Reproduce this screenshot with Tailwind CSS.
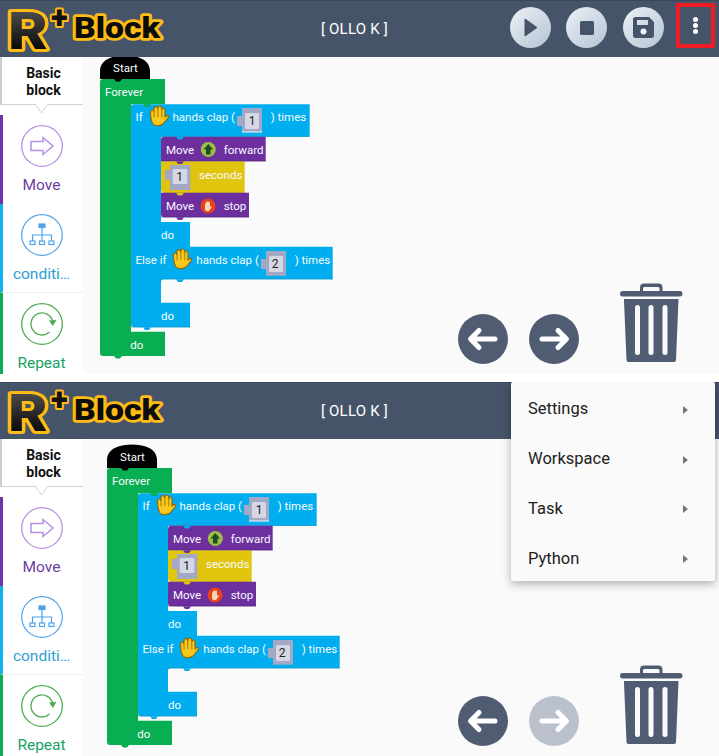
<!DOCTYPE html>
<html>
<head>
<meta charset="utf-8">
<script src="https://cdn.jsdelivr.net/npm/@tailwindcss/browser@4"></script>
</head>
<body class="m-0 bg-white font-['Roboto',sans-serif]">
<div class="w-[719px] h-[756px] overflow-hidden flex flex-col gap-[8px]">

<!-- PANEL 1 -->
<section class="relative w-[719px] h-[374px] flex flex-col overflow-hidden">
  <header class="relative h-[57px] shrink-0 bg-[#46546a] border-t border-[#3a4659] flex items-center">
    <svg class="absolute left-0 top-[-1px]" width="170" height="64" viewBox="0 0 170 64">
      <defs><linearGradient id="lg1" x1="0" y1="0" x2="0" y2="1"><stop offset="0" stop-color="#5e5e5e"/><stop offset="0.8" stop-color="#080808"/><stop offset="1" stop-color="#000"/></linearGradient></defs>
      <text x="8" y="49" font-family="Roboto" font-weight="900" font-size="52" fill="url(#lg1)" stroke="#fdbb14" stroke-width="6" stroke-linejoin="round" paint-order="stroke" textLength="40" lengthAdjust="spacingAndGlyphs">R</text>
      <text x="51" y="28" font-family="Roboto" font-weight="900" font-size="31" fill="#111" stroke="#fdbb14" stroke-width="4" stroke-linejoin="round" paint-order="stroke">+</text>
      <text x="74" y="38" font-family="Roboto" font-weight="900" font-size="29" fill="#0c0c0c" stroke="#fdbb14" stroke-width="5.5" stroke-linejoin="round" paint-order="stroke" textLength="86" lengthAdjust="spacingAndGlyphs">Block</text>
    </svg>
    <div class="absolute left-[321px] top-[18px] text-[15px] leading-[20px] tracking-[0.2px] text-white whitespace-pre">[ OLLO K ]</div>
    <div class="absolute left-[510px] top-[6px] w-[41px] h-[41px] rounded-full bg-gradient-to-br from-[#eef2f6] to-[#b3c3d4] flex items-center justify-center">
      <svg width="14" height="19" viewBox="0 0 14 19"><path d="M1 1 L13 9.5 L1 18 Z" fill="#46546a" stroke="#46546a" stroke-linejoin="round"/></svg>
    </div>
    <div class="absolute left-[566px] top-[6px] w-[41px] h-[41px] rounded-full bg-gradient-to-br from-[#eef2f6] to-[#b3c3d4] flex items-center justify-center">
      <div class="w-[14px] h-[14px] rounded-[1.5px] bg-[#46546a]"></div>
    </div>
    <div class="absolute left-[623px] top-[6px] w-[41px] h-[41px] rounded-full bg-gradient-to-br from-[#eef2f6] to-[#b3c3d4] flex items-center justify-center">
      <svg width="21" height="21" viewBox="0 0 21 21"><path d="M2.5 0 H16 L21 5 V18.5 A2.5 2.5 0 0 1 18.5 21 H2.5 A2.5 2.5 0 0 1 0 18.5 V2.5 A2.5 2.5 0 0 1 2.5 0 Z M4 3 V8 H15 V3 Z" fill="#46546a" fill-rule="evenodd"/><circle cx="10.5" cy="14.5" r="3" fill="#eef2f6"/></svg>
    </div>
    <div class="absolute left-[676px] top-[2px] w-[39px] h-[45px] border-[4px] border-[#ed1c24] flex flex-col items-center justify-center gap-[1.7px]">
      <span class="w-[4.4px] h-[4.4px] rounded-full bg-white"></span>
      <span class="w-[4.4px] h-[4.4px] rounded-full bg-white"></span>
      <span class="w-[4.4px] h-[4.4px] rounded-full bg-white"></span>
    </div>
  </header>
  <div class="flex flex-1 min-h-0">
    <aside class="w-[83px] shrink-0 bg-white flex flex-col">
      <div class="relative h-[48px] shrink-0 border-l-2 border-[#c9cdd6] border-b border-b-[#cfd2d8] pl-[2px] pt-[2px] flex items-center justify-center text-center text-[14px] leading-[17px] font-bold text-[#111]">
        <span>Basic<br>block</span>
        <svg class="absolute left-[33px] top-[47px]" width="14" height="10" viewBox="0 0 14 10"><path d="M0 0 L6.5 9 L13 0" fill="#fff" stroke="#cfd2d8"/></svg>
      </div>
      <div class="mt-[10px] h-[89px] shrink-0 border-l-[3px] border-[#6f35a5] pr-[3px] pt-[10px] flex flex-col items-center">
        <svg width="42" height="42" viewBox="0 0 42 42" fill="none" stroke="#b78fe3" stroke-width="1.3"><circle cx="21" cy="21" r="20.3"/><path d="M10 16.5 H22 V12.5 L32 21 L22 29.5 V25.5 H10 Z" stroke-width="1.5"/></svg>
        <span class="mt-[8px] text-[15.5px] leading-[20px] text-[#6c3d9f]">Move</span>
      </div>
      <div class="h-[88px] shrink-0 border-l-[3px] border-[#0fb2ef] pr-[3px] pt-[10px] flex flex-col items-center">
        <svg width="42" height="42" viewBox="0 0 42 42" fill="none" stroke="#4fa3ea" stroke-width="1.2"><circle cx="21" cy="21" r="20.3"/><rect x="18" y="10" width="6" height="3.5" fill="#4fa3ea"/><path d="M21 13.5 V27 M11.5 27 V21 H30.5 V27"/><rect x="9" y="27" width="5" height="3.5"/><rect x="18.5" y="27" width="5" height="3.5"/><rect x="28" y="27" width="5" height="3.5"/></svg>
        <span class="mt-[8px] text-[15.5px] leading-[20px] text-[#2e9fd3]">conditi…</span>
      </div>
      <div class="flex-1 border-l-[3px] border-[#0aae52] border-t border-t-[#eeeeee] pr-[3px] pt-[10px] flex flex-col items-center">
        <svg width="42" height="42" viewBox="0 0 42 42" fill="none" stroke="#4cad50" stroke-width="1.3"><circle cx="21" cy="21" r="20.3"/><path d="M28.5 29 A11 11 0 1 1 31.8 19"/><path d="M28 17.5 L35.5 17 L31.8 23 Z" fill="#4cad50" stroke="none"/></svg>
        <span class="mt-[8px] text-[15.5px] leading-[20px] text-[#18a266]">Repeat</span>
      </div>
    </aside>
    <main class="relative flex-1 bg-[#fafafa] overflow-hidden">
      <svg class="absolute left-[17px] top-[-2px]" width="260" height="310" viewBox="0 -24 260 310" overflow="visible">
        <path d="M0 0 V-8 C0 -14 4 -19 10 -21 C17 -24.5 33 -24.5 40 -21 C46 -19 50 -14 50 -8 V0 Z" fill="#000"/>
        <path d="M3 0 H65 V25.3 H31 V252.7 H65 V277 H3 Q0 277 0 274 V3 Q0 0 3 0 Z" fill="#0aae52"/>
        <path d="M34 25.3 H209.7 V57.7 H61 V143 H90 V167.7 H232.7 V200.3 H64 Q61 200.3 61 203 V223.7 H90 V248.3 H34 Q31 248.3 31 245 V28 Q31 25.3 34 25.3 Z" fill="#00aeef"/>
        <path d="M61 57.2 H209.7 V57.7 H61 Z M61 199.8 H232.7 V200.3 H61 Z M31 247.8 H90 V248.3 H31 Z" fill="#0a86bd"/>
        <path d="M64 57.7 H165.7 V82.3 H61 V61 Q61 57.7 64 57.7 Z" fill="#6d2f9e"/>
        <path d="M61 82.3 H144.7 V113.7 H64 Q61 113.7 61 110 Z" fill="#e0c40e"/>
        <path d="M61 113.7 H149 V138.3 H64 Q61 138.3 61 135 Z" fill="#6d2f9e"/>
        <path d="M61 81.8 H165.7 V82.3 H61 Z M61 137.8 H149 V138.3 H61 Z" fill="#4c1f75"/>
        <path d="M64 113.2 H144.7 V113.7 H64 Z" fill="#a8920c"/>
        <path d="M14 0 L16 2.5 H20 L22 0 Z" fill="#000"/>
        <path d="M43 25.3 L45 28 H49 L51 25.3 Z" fill="#0aae52"/>
        <path d="M76 57.7 L78 60.5 H82 L84 57.7 Z" fill="#00aeef"/>
        <path d="M76 82.3 L78 85 H82 L84 82.3 Z" fill="#6d2f9e"/>
        <path d="M76 113.7 L78 116.5 H82 L84 113.7 Z" fill="#e0c40e"/>
        <path d="M76 138.3 L78 141 H82 L84 138.3 Z" fill="#6d2f9e"/>
        <path d="M76 200.3 L78 203 H82 L84 200.3 Z" fill="#00aeef"/>
        <path d="M43 167.7 L45 170.5 H49 L51 167.7 Z" fill="#00aeef"/>
        <path d="M43 248.3 L45 251 H49 L51 248.3 Z" fill="#00aeef"/>
        <path d="M14 277 L16 279.5 H20 L22 277 Z" fill="#0aae52"/>
        <g fill="#f7fbff" font-family="Roboto" font-size="11.5">
          <text x="25.5" y="-7.5" text-anchor="middle">Start</text>
          <text x="5" y="16.5">Forever</text>
          <text x="35.5" y="41.5">If</text>
          <text x="72.5" y="41.5">hands clap (</text>
          <text x="170.7" y="41.5">) times</text>
          <text x="66" y="75">Move</text>
          <text x="123.7" y="75">forward</text>
          <text x="99" y="99.5">seconds</text>
          <text x="66" y="131">Move</text>
          <text x="123.7" y="131">stop</text>
          <text x="61" y="160">do</text>
          <text x="35.5" y="185">Else if</text>
          <text x="96.3" y="185">hands clap (</text>
          <text x="194.7" y="185">) times</text>
          <text x="61" y="241">do</text>
          <text x="30.3" y="270">do</text>
        </g>
        <g>
          <path d="M137 37 H142 V29 H162 V53.3 H142 V47 H137 Z" fill="#a3a8c4"/>
          <rect x="145" y="34" width="14" height="16" rx="1.5" fill="#d6d7e4"/>
          <path d="M142 53 H162" stroke="#eaf7ff" stroke-width="1"/>
          <text x="152" y="46" text-anchor="middle" font-family="Roboto" font-size="12" fill="#222">1</text>
        </g>
        <g>
          <path d="M65 91 H70 V86 H90.3 V111 H70 V101 H65 Z" fill="#a3a8c4"/>
          <rect x="72.7" y="90" width="14.6" height="15" rx="1.5" fill="#d6d7e4"/>
          <text x="79.5" y="102" text-anchor="middle" font-family="Roboto" font-size="12" fill="#222">1</text>
        </g>
        <g>
          <path d="M161 180 H166 V172 H186 V196.7 H166 V190 H161 Z" fill="#a3a8c4"/>
          <rect x="169" y="177" width="14" height="16" rx="1.5" fill="#d6d7e4"/>
          <text x="175" y="189" text-anchor="middle" font-family="Roboto" font-size="12" fill="#222">2</text>
        </g>
        <g fill="#f8c81c" stroke="#8f6408" stroke-width="1.1" stroke-linejoin="round" stroke-linecap="round">
          <path d="M53 45 C51 42 50.5 38 50.5 33 C50.5 30.5 53.5 30.5 53.8 32.5 L54 29.5 C54 27 57.5 27 57.7 29.5 L58 28.5 C58 26.5 61.5 26.5 61.7 29 L62 30.5 C62 28.5 65 28.5 65 31 V38 L67 36.5 C68.5 36 69 38 68 39 L63 45 C61 47 55 47.5 53 45 Z"/>
          <path d="M54 32.5 V38 M57.8 29.5 V37.5 M61.8 30 V38" fill="none" stroke-width="0.8"/>
        </g>
        <g fill="#f8c81c" stroke="#8f6408" stroke-width="1.1" stroke-linejoin="round" stroke-linecap="round">
          <path d="M76 188 C74 185 73.5 181 73.5 176 C73.5 173.5 76.5 173.5 76.8 175.5 L77 172.5 C77 170 80.5 170 80.7 172.5 L81 171.5 C81 169.5 84.5 169.5 84.7 172 L85 173.5 C85 171.5 88 171.5 88 174 V181 L90 179.5 C91.5 179 92 181 91 182 L86 188 C84 190 78 190.5 76 188 Z"/>
          <path d="M77 175.5 V181 M80.8 172.5 V180.5 M84.8 173 V181" fill="none" stroke-width="0.8"/>
        </g>
        <circle cx="108.3" cy="70.5" r="7.5" fill="#9bbf45"/>
        <path d="M108.3 65 L113 70.5 H110.5 V75.5 H106 V70.5 H103.6 Z" fill="#1f4a22"/>
        <circle cx="108" cy="127" r="7.5" fill="#e8421c"/>
        <path d="M105 130.5 V125 C105 124 106 124 106 125 V123.5 C106 122.5 107.3 122.5 107.3 123.5 V123 C107.3 122 108.7 122 108.7 123 V123.5 C108.7 122.5 110 122.5 110 123.5 V128 L111.2 127 C112 127 112 127.8 111.6 128.2 L109.5 131.5 C108 132.5 106 132.5 105 130.5 Z" fill="#f8d8b4"/>
      </svg>
      <svg class="absolute left-[375px] top-[257px]" width="50" height="50" viewBox="0 0 50 50"><circle cx="25" cy="25" r="25" fill="#505c72"/><path d="M37 25 H13 M21 16.5 L12.5 25 L21 33.5" fill="none" stroke="#fff" stroke-width="5" stroke-linecap="round" stroke-linejoin="round"/></svg>
      <svg class="absolute left-[445.5px] top-[257px]" width="50" height="50" viewBox="0 0 50 50"><circle cx="25" cy="25" r="25" fill="#505c72"/><path d="M13 25 H37 M29 16.5 L37.5 25 L29 33.5" fill="none" stroke="#fff" stroke-width="5" stroke-linecap="round" stroke-linejoin="round"/></svg>
      <svg class="absolute left-[537px] top-[226px]" width="63" height="80" viewBox="0 0 63 80"><path d="M20 8 V4.5 Q20 0.5 24 0.5 H38.5 Q42.5 0.5 42.5 4.5 V8 H39.5 V5.5 Q39.5 4 38 4 H24.5 Q23 4 23 5.5 V8 Z" fill="#505c72"/><rect x="0" y="8" width="62.5" height="5.5" rx="2.7" fill="#505c72"/><path d="M4 16 H58.5 L56 77 Q56 79 54 79 H8.5 Q6.5 79 6.5 77 L4 18 Z" fill="#505c72"/><rect x="15" y="22" width="5" height="50" rx="2.5" fill="#fafafa"/><rect x="28.5" y="22" width="5" height="50" rx="2.5" fill="#fafafa"/><rect x="42.5" y="22" width="5" height="50" rx="2.5" fill="#fafafa"/></svg>
    </main>
  </div>
</section>

<!-- PANEL 2 -->
<section class="relative w-[719px] h-[374px] flex flex-col overflow-hidden">
  <header class="relative h-[57px] shrink-0 bg-[#46546a] border-t border-[#3a4659] flex items-center">
    <svg class="absolute left-0 top-[-1px]" width="170" height="64" viewBox="0 0 170 64">
      <defs><linearGradient id="lg2" x1="0" y1="0" x2="0" y2="1"><stop offset="0" stop-color="#5e5e5e"/><stop offset="0.8" stop-color="#080808"/><stop offset="1" stop-color="#000"/></linearGradient></defs>
      <text x="8" y="49" font-family="Roboto" font-weight="900" font-size="52" fill="url(#lg2)" stroke="#fdbb14" stroke-width="6" stroke-linejoin="round" paint-order="stroke" textLength="40" lengthAdjust="spacingAndGlyphs">R</text>
      <text x="51" y="28" font-family="Roboto" font-weight="900" font-size="31" fill="#111" stroke="#fdbb14" stroke-width="4" stroke-linejoin="round" paint-order="stroke">+</text>
      <text x="74" y="38" font-family="Roboto" font-weight="900" font-size="29" fill="#0c0c0c" stroke="#fdbb14" stroke-width="5.5" stroke-linejoin="round" paint-order="stroke" textLength="86" lengthAdjust="spacingAndGlyphs">Block</text>
    </svg>
    <div class="absolute left-[321px] top-[18px] text-[15px] leading-[20px] tracking-[0.2px] text-white whitespace-pre">[ OLLO K ]</div>
  </header>
  <div class="flex flex-1 min-h-0">
    <aside class="w-[83px] shrink-0 bg-white flex flex-col">
      <div class="relative h-[48px] shrink-0 border-l-2 border-[#c9cdd6] border-b border-b-[#cfd2d8] pl-[2px] pt-[2px] flex items-center justify-center text-center text-[14px] leading-[17px] font-bold text-[#111]">
        <span>Basic<br>block</span>
        <svg class="absolute left-[33px] top-[47px]" width="14" height="10" viewBox="0 0 14 10"><path d="M0 0 L6.5 9 L13 0" fill="#fff" stroke="#cfd2d8"/></svg>
      </div>
      <div class="mt-[10px] h-[89px] shrink-0 border-l-[3px] border-[#6f35a5] pr-[3px] pt-[10px] flex flex-col items-center">
        <svg width="42" height="42" viewBox="0 0 42 42" fill="none" stroke="#b78fe3" stroke-width="1.3"><circle cx="21" cy="21" r="20.3"/><path d="M10 16.5 H22 V12.5 L32 21 L22 29.5 V25.5 H10 Z" stroke-width="1.5"/></svg>
        <span class="mt-[8px] text-[15.5px] leading-[20px] text-[#6c3d9f]">Move</span>
      </div>
      <div class="h-[88px] shrink-0 border-l-[3px] border-[#0fb2ef] pr-[3px] pt-[10px] flex flex-col items-center">
        <svg width="42" height="42" viewBox="0 0 42 42" fill="none" stroke="#4fa3ea" stroke-width="1.2"><circle cx="21" cy="21" r="20.3"/><rect x="18" y="10" width="6" height="3.5" fill="#4fa3ea"/><path d="M21 13.5 V27 M11.5 27 V21 H30.5 V27"/><rect x="9" y="27" width="5" height="3.5"/><rect x="18.5" y="27" width="5" height="3.5"/><rect x="28" y="27" width="5" height="3.5"/></svg>
        <span class="mt-[8px] text-[15.5px] leading-[20px] text-[#2e9fd3]">conditi…</span>
      </div>
      <div class="flex-1 border-l-[3px] border-[#0aae52] border-t border-t-[#eeeeee] pr-[3px] pt-[10px] flex flex-col items-center">
        <svg width="42" height="42" viewBox="0 0 42 42" fill="none" stroke="#4cad50" stroke-width="1.3"><circle cx="21" cy="21" r="20.3"/><path d="M28.5 29 A11 11 0 1 1 31.8 19"/><path d="M28 17.5 L35.5 17 L31.8 23 Z" fill="#4cad50" stroke="none"/></svg>
        <span class="mt-[8px] text-[15.5px] leading-[20px] text-[#18a266]">Repeat</span>
      </div>
    </aside>
    <main class="relative flex-1 bg-[#fafafa] overflow-hidden">
      <svg class="absolute left-[24px] top-[5px]" width="260" height="310" viewBox="0 -24 260 310" overflow="visible">
        <path d="M0 0 V-8 C0 -14 4 -19 10 -21 C17 -24.5 33 -24.5 40 -21 C46 -19 50 -14 50 -8 V0 Z" fill="#000"/>
        <path d="M3 0 H65 V25.3 H31 V252.7 H65 V277 H3 Q0 277 0 274 V3 Q0 0 3 0 Z" fill="#0aae52"/>
        <path d="M34 25.3 H209.7 V57.7 H61 V143 H90 V167.7 H232.7 V200.3 H64 Q61 200.3 61 203 V223.7 H90 V248.3 H34 Q31 248.3 31 245 V28 Q31 25.3 34 25.3 Z" fill="#00aeef"/>
        <path d="M61 57.2 H209.7 V57.7 H61 Z M61 199.8 H232.7 V200.3 H61 Z M31 247.8 H90 V248.3 H31 Z" fill="#0a86bd"/>
        <path d="M64 57.7 H165.7 V82.3 H61 V61 Q61 57.7 64 57.7 Z" fill="#6d2f9e"/>
        <path d="M61 82.3 H144.7 V113.7 H64 Q61 113.7 61 110 Z" fill="#e0c40e"/>
        <path d="M61 113.7 H149 V138.3 H64 Q61 138.3 61 135 Z" fill="#6d2f9e"/>
        <path d="M61 81.8 H165.7 V82.3 H61 Z M61 137.8 H149 V138.3 H61 Z" fill="#4c1f75"/>
        <path d="M64 113.2 H144.7 V113.7 H64 Z" fill="#a8920c"/>
        <path d="M14 0 L16 2.5 H20 L22 0 Z" fill="#000"/>
        <path d="M43 25.3 L45 28 H49 L51 25.3 Z" fill="#0aae52"/>
        <path d="M76 57.7 L78 60.5 H82 L84 57.7 Z" fill="#00aeef"/>
        <path d="M76 82.3 L78 85 H82 L84 82.3 Z" fill="#6d2f9e"/>
        <path d="M76 113.7 L78 116.5 H82 L84 113.7 Z" fill="#e0c40e"/>
        <path d="M76 138.3 L78 141 H82 L84 138.3 Z" fill="#6d2f9e"/>
        <path d="M76 200.3 L78 203 H82 L84 200.3 Z" fill="#00aeef"/>
        <path d="M43 167.7 L45 170.5 H49 L51 167.7 Z" fill="#00aeef"/>
        <path d="M43 248.3 L45 251 H49 L51 248.3 Z" fill="#00aeef"/>
        <path d="M14 277 L16 279.5 H20 L22 277 Z" fill="#0aae52"/>
        <g fill="#f7fbff" font-family="Roboto" font-size="11.5">
          <text x="25.5" y="-7.5" text-anchor="middle">Start</text>
          <text x="5" y="16.5">Forever</text>
          <text x="35.5" y="41.5">If</text>
          <text x="72.5" y="41.5">hands clap (</text>
          <text x="170.7" y="41.5">) times</text>
          <text x="66" y="75">Move</text>
          <text x="123.7" y="75">forward</text>
          <text x="99" y="99.5">seconds</text>
          <text x="66" y="131">Move</text>
          <text x="123.7" y="131">stop</text>
          <text x="61" y="160">do</text>
          <text x="35.5" y="185">Else if</text>
          <text x="96.3" y="185">hands clap (</text>
          <text x="194.7" y="185">) times</text>
          <text x="61" y="241">do</text>
          <text x="30.3" y="270">do</text>
        </g>
        <g>
          <path d="M137 37 H142 V29 H162 V53.3 H142 V47 H137 Z" fill="#a3a8c4"/>
          <rect x="145" y="34" width="14" height="16" rx="1.5" fill="#d6d7e4"/>
          <path d="M142 53 H162" stroke="#eaf7ff" stroke-width="1"/>
          <text x="152" y="46" text-anchor="middle" font-family="Roboto" font-size="12" fill="#222">1</text>
        </g>
        <g>
          <path d="M65 91 H70 V86 H90.3 V111 H70 V101 H65 Z" fill="#a3a8c4"/>
          <rect x="72.7" y="90" width="14.6" height="15" rx="1.5" fill="#d6d7e4"/>
          <text x="79.5" y="102" text-anchor="middle" font-family="Roboto" font-size="12" fill="#222">1</text>
        </g>
        <g>
          <path d="M161 180 H166 V172 H186 V196.7 H166 V190 H161 Z" fill="#a3a8c4"/>
          <rect x="169" y="177" width="14" height="16" rx="1.5" fill="#d6d7e4"/>
          <text x="175" y="189" text-anchor="middle" font-family="Roboto" font-size="12" fill="#222">2</text>
        </g>
        <g fill="#f8c81c" stroke="#8f6408" stroke-width="1.1" stroke-linejoin="round" stroke-linecap="round">
          <path d="M53 45 C51 42 50.5 38 50.5 33 C50.5 30.5 53.5 30.5 53.8 32.5 L54 29.5 C54 27 57.5 27 57.7 29.5 L58 28.5 C58 26.5 61.5 26.5 61.7 29 L62 30.5 C62 28.5 65 28.5 65 31 V38 L67 36.5 C68.5 36 69 38 68 39 L63 45 C61 47 55 47.5 53 45 Z"/>
          <path d="M54 32.5 V38 M57.8 29.5 V37.5 M61.8 30 V38" fill="none" stroke-width="0.8"/>
        </g>
        <g fill="#f8c81c" stroke="#8f6408" stroke-width="1.1" stroke-linejoin="round" stroke-linecap="round">
          <path d="M76 188 C74 185 73.5 181 73.5 176 C73.5 173.5 76.5 173.5 76.8 175.5 L77 172.5 C77 170 80.5 170 80.7 172.5 L81 171.5 C81 169.5 84.5 169.5 84.7 172 L85 173.5 C85 171.5 88 171.5 88 174 V181 L90 179.5 C91.5 179 92 181 91 182 L86 188 C84 190 78 190.5 76 188 Z"/>
          <path d="M77 175.5 V181 M80.8 172.5 V180.5 M84.8 173 V181" fill="none" stroke-width="0.8"/>
        </g>
        <circle cx="108.3" cy="70.5" r="7.5" fill="#9bbf45"/>
        <path d="M108.3 65 L113 70.5 H110.5 V75.5 H106 V70.5 H103.6 Z" fill="#1f4a22"/>
        <circle cx="108" cy="127" r="7.5" fill="#e8421c"/>
        <path d="M105 130.5 V125 C105 124 106 124 106 125 V123.5 C106 122.5 107.3 122.5 107.3 123.5 V123 C107.3 122 108.7 122 108.7 123 V123.5 C108.7 122.5 110 122.5 110 123.5 V128 L111.2 127 C112 127 112 127.8 111.6 128.2 L109.5 131.5 C108 132.5 106 132.5 105 130.5 Z" fill="#f8d8b4"/>
      </svg>
      <svg class="absolute left-[375px] top-[257px]" width="50" height="50" viewBox="0 0 50 50"><circle cx="25" cy="25" r="25" fill="#505c72"/><path d="M37 25 H13 M21 16.5 L12.5 25 L21 33.5" fill="none" stroke="#fff" stroke-width="5" stroke-linecap="round" stroke-linejoin="round"/></svg>
      <svg class="absolute left-[445.5px] top-[257px]" width="50" height="50" viewBox="0 0 50 50"><circle cx="25" cy="25" r="25" fill="#bac1cc"/><path d="M13 25 H37 M29 16.5 L37.5 25 L29 33.5" fill="none" stroke="#fff" stroke-width="5" stroke-linecap="round" stroke-linejoin="round"/></svg>
      <svg class="absolute left-[537px] top-[226px]" width="63" height="80" viewBox="0 0 63 80"><path d="M20 8 V4.5 Q20 0.5 24 0.5 H38.5 Q42.5 0.5 42.5 4.5 V8 H39.5 V5.5 Q39.5 4 38 4 H24.5 Q23 4 23 5.5 V8 Z" fill="#505c72"/><rect x="0" y="8" width="62.5" height="5.5" rx="2.7" fill="#505c72"/><path d="M4 16 H58.5 L56 77 Q56 79 54 79 H8.5 Q6.5 79 6.5 77 L4 18 Z" fill="#505c72"/><rect x="15" y="22" width="5" height="50" rx="2.5" fill="#fafafa"/><rect x="28.5" y="22" width="5" height="50" rx="2.5" fill="#fafafa"/><rect x="42.5" y="22" width="5" height="50" rx="2.5" fill="#fafafa"/></svg>
    </main>
  </div>
  <!-- dropdown menu -->
  <div class="absolute left-[511px] top-[0px] w-[204px] h-[199px] pt-[1px] bg-[#fafafa] rounded-[2px] shadow-[0_3px_10px_rgba(0,0,0,0.3)] flex flex-col">
    <div class="h-[49.7px] shrink-0 mt-[2px] flex items-center justify-between pl-[17px] pr-[27px] text-[16.5px] text-[#212121]"><span>Settings</span><span class="w-0 h-0 border-y-[4px] border-y-transparent border-l-[5px] border-l-[#757575]"></span></div>
    <div class="h-[49.7px] shrink-0 flex items-center justify-between pl-[17px] pr-[27px] text-[16.5px] text-[#212121]"><span>Workspace</span><span class="w-0 h-0 border-y-[4px] border-y-transparent border-l-[5px] border-l-[#757575]"></span></div>
    <div class="h-[49.7px] shrink-0 flex items-center justify-between pl-[17px] pr-[27px] text-[16.5px] text-[#212121]"><span>Task</span><span class="w-0 h-0 border-y-[4px] border-y-transparent border-l-[5px] border-l-[#757575]"></span></div>
    <div class="h-[49.7px] shrink-0 flex items-center justify-between pl-[17px] pr-[27px] text-[16.5px] text-[#212121]"><span>Python</span><span class="w-0 h-0 border-y-[4px] border-y-transparent border-l-[5px] border-l-[#757575]"></span></div>
  </div>
</section>
</div>
</body>
</html>
